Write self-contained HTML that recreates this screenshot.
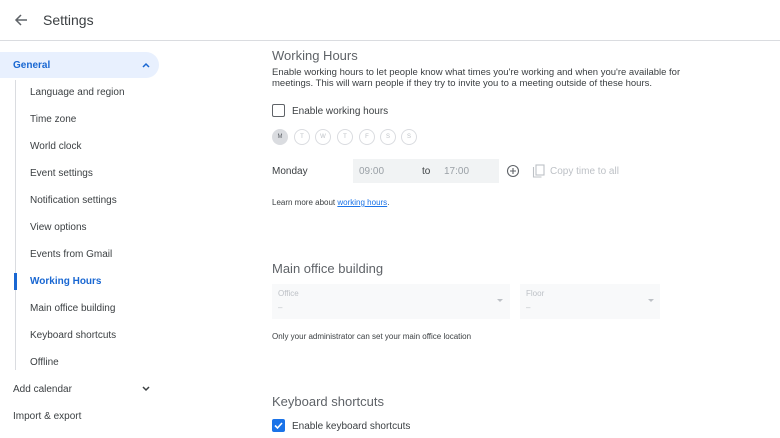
<!DOCTYPE html>
<html><head><style>
*{margin:0;padding:0;box-sizing:border-box}
body{width:780px;height:438px;overflow:hidden;background:#fff;font-family:"Liberation Sans",sans-serif;color:#3c4043;position:relative}
.a{position:absolute;white-space:nowrap}
.nav{font-size:10px;color:#3c4043}
</style></head><body>
<svg class="a" style="left:13px;top:12px" width="16" height="16" viewBox="0 0 16 16"><path d="M14 8H3M8 3L3 8l5 5" stroke="#5f6368" stroke-width="1.5" fill="none"/></svg>
<div class="a" style="left:43px;top:12px;font-size:14px;color:#3c4043">Settings</div>
<div class="a" style="left:0;top:40px;width:780px;height:1px;background:#dadce0"></div>
<div class="a" style="left:0;top:52px;width:159px;height:26px;background:#e8f0fe;border-radius:0 13px 13px 0"></div>
<div class="a" style="left:13px;top:60px;font-size:10px;color:#1967d2;font-weight:bold">General</div>
<svg class="a" style="left:141px;top:61px" width="10" height="8"><path d="M2 6l3-3 3 3" stroke="#1967d2" stroke-width="1.5" fill="none"/></svg>
<div class="a" style="left:15px;top:80px;width:1px;height:290px;background:#dadce0"></div>
<div class="a" style="left:14px;top:273px;width:3px;height:17px;background:#1967d2"></div>
<div class="a nav" style="left:30px;top:87px">Language and region</div>
<div class="a nav" style="left:30px;top:114px">Time zone</div>
<div class="a nav" style="left:30px;top:141px">World clock</div>
<div class="a nav" style="left:30px;top:168px">Event settings</div>
<div class="a nav" style="left:30px;top:195px">Notification settings</div>
<div class="a nav" style="left:30px;top:222px">View options</div>
<div class="a nav" style="left:30px;top:249px">Events from Gmail</div>
<div class="a nav" style="left:30px;top:276px;color:#1967d2;font-weight:bold">Working Hours</div>
<div class="a nav" style="left:30px;top:303px">Main office building</div>
<div class="a nav" style="left:30px;top:330px">Keyboard shortcuts</div>
<div class="a nav" style="left:30px;top:357px">Offline</div>
<div class="a nav" style="left:13px;top:384px">Add calendar</div>
<svg class="a" style="left:141px;top:385px" width="10" height="8"><path d="M2 2l3 3 3-3" stroke="#3c4043" stroke-width="1.5" fill="none"/></svg>
<div class="a nav" style="left:13px;top:411px">Import &amp; export</div>

<div class="a" style="left:272px;top:48px;font-size:13px;color:#5f6368">Working Hours</div>
<div class="a" style="left:272px;top:67px;font-size:9.5px;line-height:11px">Enable working hours to let people know what times you're working and when you're available for<br>meetings. This will warn people if they try to invite you to a meeting outside of these hours.</div>
<div class="a" style="left:272px;top:104px;width:13px;height:13px;border:1.6px solid #5f6368;border-radius:2px"></div>
<div class="a" style="left:292px;top:106px;font-size:10px">Enable working hours</div>
<div class="a" style="left:272px;top:129px;width:16px;height:16px;border-radius:50%;background:#dadce0;font-size:6px;text-align:center;line-height:16px;color:#5f6368">M</div>
<div class="a" style="left:294px;top:129px;width:16px;height:16px;border-radius:50%;border:1px solid #dadce0;font-size:6px;text-align:center;line-height:14px;color:#bdc1c6">T</div>
<div class="a" style="left:315px;top:129px;width:16px;height:16px;border-radius:50%;border:1px solid #dadce0;font-size:6px;text-align:center;line-height:14px;color:#bdc1c6">W</div>
<div class="a" style="left:337px;top:129px;width:16px;height:16px;border-radius:50%;border:1px solid #dadce0;font-size:6px;text-align:center;line-height:14px;color:#bdc1c6">T</div>
<div class="a" style="left:359px;top:129px;width:16px;height:16px;border-radius:50%;border:1px solid #dadce0;font-size:6px;text-align:center;line-height:14px;color:#bdc1c6">F</div>
<div class="a" style="left:380px;top:129px;width:16px;height:16px;border-radius:50%;border:1px solid #dadce0;font-size:6px;text-align:center;line-height:14px;color:#bdc1c6">S</div>
<div class="a" style="left:401px;top:129px;width:16px;height:16px;border-radius:50%;border:1px solid #dadce0;font-size:6px;text-align:center;line-height:14px;color:#bdc1c6">S</div>
<div class="a" style="left:272px;top:166px;font-size:10px">Monday</div>
<div class="a" style="left:353px;top:159px;width:146px;height:24px;background:#f1f3f4"></div>
<div class="a" style="left:359px;top:166px;font-size:10px;color:#9aa0a6">09:00</div>
<div class="a" style="left:422px;top:166px;font-size:10px">to</div>
<div class="a" style="left:444px;top:166px;font-size:10px;color:#9aa0a6">17:00</div>
<svg class="a" style="left:506px;top:164px" width="14" height="14"><circle cx="7" cy="7" r="5.5" stroke="#5f6368" fill="none" stroke-width="1.1"/><path d="M7 4v6M4 7h6" stroke="#5f6368" stroke-width="1.1"/></svg>
<svg class="a" style="left:532px;top:164px" width="13" height="14"><path d="M1.5 3v10h8" stroke="#bdc1c6" fill="none" stroke-width="1.1"/><rect x="4" y="1" width="8" height="10" stroke="#bdc1c6" fill="none" stroke-width="1.1"/></svg>
<div class="a" style="left:550px;top:166px;font-size:10px;color:#bdc1c6">Copy time to all</div>
<div class="a" style="left:272px;top:198px;font-size:8px">Learn more about <span style="color:#1a73e8;text-decoration:underline">working hours</span>.</div>

<div class="a" style="left:272px;top:261px;font-size:13px;color:#5f6368">Main office building</div>
<div class="a" style="left:272px;top:284px;width:238px;height:35px;background:#f8f9fa"></div>
<div class="a" style="left:278px;top:289px;font-size:8px;color:#bdc1c6">Office</div>
<div class="a" style="left:278px;top:303px;font-size:8px;color:#bdc1c6">–</div>
<div class="a" style="left:497px;top:299px;border:3px solid transparent;border-top-color:#bdc1c6"></div>
<div class="a" style="left:520px;top:284px;width:140px;height:35px;background:#f8f9fa"></div>
<div class="a" style="left:526px;top:289px;font-size:8px;color:#bdc1c6">Floor</div>
<div class="a" style="left:526px;top:303px;font-size:8px;color:#bdc1c6">–</div>
<div class="a" style="left:648px;top:299px;border:3px solid transparent;border-top-color:#bdc1c6"></div>
<div class="a" style="left:272px;top:332px;font-size:8px">Only your administrator can set your main office location</div>

<div class="a" style="left:272px;top:394px;font-size:13px;color:#5f6368">Keyboard shortcuts</div>
<div class="a" style="left:272px;top:419px;width:13px;height:13px;background:#1a73e8;border-radius:2px"></div>
<svg class="a" style="left:272px;top:419px" width="13" height="13"><path d="M3 6.5l2.5 2.5 4.5-5" stroke="#fff" stroke-width="1.6" fill="none"/></svg>
<div class="a" style="left:292px;top:421px;font-size:10px">Enable keyboard shortcuts</div>
</body></html>
